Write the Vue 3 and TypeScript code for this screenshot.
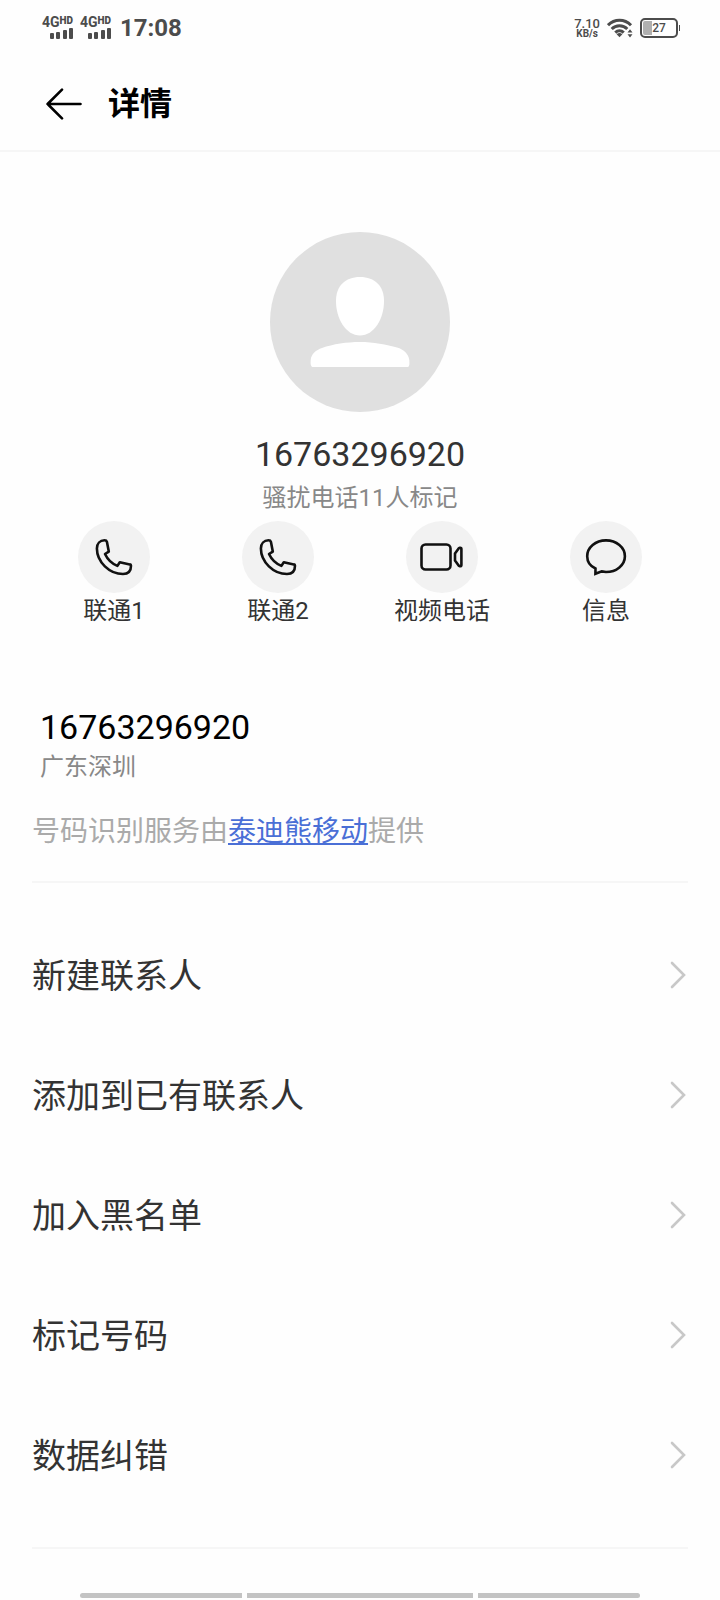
<script setup lang="ts">
interface Action {
  label: string
  icon: 'phone' | 'video' | 'message'
}

const phoneNumber = '16763296920'
const batteryLevel = 27
const signals = ['SIM 1', 'SIM 2']

const actions: Action[] = [
  { label: '联通1', icon: 'phone' },
  { label: '联通2', icon: 'phone' },
  { label: '视频电话', icon: 'video' },
  { label: '信息', icon: 'message' },
]

const options: string[] = ['新建联系人', '添加到已有联系人', '加入黑名单', '标记号码', '数据纠错']
</script>

<template>
  <div class="screen">
    <div class="status">
      <div v-for="sim in signals" :key="sim" class="signal">
        <div class="network">4G<span class="hd">HD</span></div>
        <svg class="bars" width="24" height="12" viewBox="0 0 24 12" aria-hidden="true">
          <rect x="0" y="6" width="4" height="6" rx="1" />
          <rect x="6" y="5" width="4" height="7" rx="1" />
          <rect x="13" y="3" width="4" height="9" rx="1" />
          <rect x="19" y="1" width="4" height="11" rx="1" />
        </svg>
      </div>
      <time class="clock">17:08</time>
      <div class="speed">
        <span class="rate">7.10</span>
        <span class="unit">KB/s</span>
      </div>
      <svg class="wifi" width="26" height="20" viewBox="0 0 26 20" aria-hidden="true">
        <g fill="none" stroke="#4c4c4c" stroke-width="3">
          <path d="M1 7.2C7.500 .6 17.500 .6 24 7.200" />
          <path d="M4.700 11C9 6.600 16 6.600 20.300 11" />
          <path d="M8.300 14.600C10.800 12 14.200 12 16.700 14.600" />
        </g>
        <path d="M9.600 16.200Q12.500 13.800 15.400 16.200L12.500 19.200Z" fill="#4c4c4c" />
        <path d="M20.500 14.500L23 11.200L25.500 14.500ZM20.500 16.200L23 19.500L25.500 16.200Z" fill="#4c4c4c" />
      </svg>
      <div class="battery">
        <div class="charge" :style="{ width: batteryLevel + '%' }"></div>
        <span class="level">{{ batteryLevel }}</span>
      </div>
      <div class="nub"></div>
    </div>

    <header class="header">
      <button class="back" type="button" aria-label="返回">
        <svg width="36" height="34" viewBox="0 0 36 34" fill="none" stroke="#000" stroke-width="2.600" stroke-linecap="round" stroke-linejoin="round">
          <path d="M34.500 17H1.600M16 2.600L1.600 17L16 31.400" />
        </svg>
      </button>
      <h1 class="title">详情</h1>
    </header>

    <main>
      <section class="profile">
        <svg class="avatar" width="180" height="180" viewBox="0 0 180 180" aria-hidden="true">
          <circle cx="90" cy="90" r="90" fill="#e0e0e0" />
          <path d="M90 45C105 45 114 54 114 69C114 87 104 103.500 90 103.500C76 103.500 66 87 66 69C66 54 75 45 90 45Z" fill="#fff" />
          <path d="M42.500 135C40.500 134.500 40.500 131 40.700 128C41.200 122 46 118 52 116C63 112 77 110 90 110C103 110 117 112.500 127 115.500C134 117.500 138.500 122 139.300 128C139.600 132 139.500 134.500 138 135Z" fill="#fff" />
        </svg>
        <h2 class="name">{{ phoneNumber }}</h2>
        <p class="marked">骚扰电话11人标记</p>
      </section>

      <nav class="actions">
        <button v-for="action in actions" :key="action.label" class="action" type="button">
          <span class="disc">
            <svg width="72" height="72" viewBox="0 0 72 72" fill="none" stroke="#111" stroke-width="2.600" stroke-linejoin="round" aria-hidden="true">
              <path v-if="action.icon === 'phone'" d="M26.500 19.300C22 19.300 18.900 22.500 18.900 27.500C18.900 41 31.500 53 45 53C50.500 53 53 49.500 53 44.800Q53 43.600 51.800 43.400L41.800 41.200L39.400 44.900Q31 41.500 27 33L30.800 30.600L28.900 20.800Q28.500 19.300 26.500 19.300Z" />
              <template v-else-if="action.icon === 'video'">
                <rect x="15.500" y="23.500" width="29" height="25" rx="4" />
                <path d="M55.400 28Q55.400 26.600 54 26.800L52.800 27.200L49 32.500V39.500L52.800 44.800L54 45.200Q55.400 45.400 55.400 44Z" />
              </template>
              <path v-else d="M25.500 47.500C20 45 17.200 40.500 17.200 35.200C17.200 26.500 25.500 19.400 36 19.400C46.500 19.400 54.900 26.500 54.900 35.200C54.900 44 46.500 51 36 51L31.800 50.400L25.400 52.800Z" stroke-linejoin="miter" />
            </svg>
          </span>
          <span class="caption">{{ action.label }}</span>
        </button>
      </nav>

      <section class="details">
        <div class="number">{{ phoneNumber }}</div>
        <div class="region">广东深圳</div>
      </section>

      <p class="provider">号码识别服务由<a href="#">泰迪熊移动</a>提供</p>

      <ul class="options">
        <li v-for="option in options" :key="option">
          <button class="option" type="button">
            <span>{{ option }}</span>
            <svg width="18" height="28" viewBox="0 0 18 28" fill="none" stroke="#c8c8c8" stroke-width="2.600" stroke-linecap="round" aria-hidden="true">
              <path d="M2 2L14 14L2 26" />
            </svg>
          </button>
        </li>
      </ul>
    </main>

    <div class="navbar" aria-hidden="true">
      <span></span>
      <span></span>
      <span></span>
    </div>
  </div>
</template>

<style>
body {
  margin: 0;
  background: #fefefe;
}
</style>

<style scoped>
.screen {
  display: flex;
  flex-direction: column;
  min-height: 100vh;
  box-sizing: border-box;
  background: #fefefe;
  color: #333;
  font-family: Roboto, "Noto Sans CJK SC", sans-serif;
}

button {
  border: 0;
  padding: 0;
  background: none;
  color: inherit;
  font: inherit;
  cursor: pointer;
}

h1,
h2,
p,
ul {
  margin: 0;
  padding: 0;
}

.status {
  display: flex;
  align-items: center;
  height: 56px;
  padding: 0 40px 0 42px;
  color: #4c4c4c;
}

.signal {
  display: flex;
  flex-direction: column;
  width: 32px;
  margin-right: 6px;
}

.network {
  display: flex;
  align-items: flex-start;
  height: 10px;
  font-size: 14px;
  font-weight: 700;
  line-height: 10px;
}

.hd {
  font-size: 10px;
  font-weight: 900;
  line-height: 8px;
}

.bars {
  align-self: flex-end;
  fill: #4c4c4c;
}

.clock {
  margin-left: 2px;
  font-size: 24px;
  font-weight: 700;
}

.speed {
  display: flex;
  flex-direction: column;
  align-items: center;
  margin-left: auto;
  font-weight: 500;
}

.rate {
  font-size: 13px;
  line-height: 11px;
}

.unit {
  font-size: 10px;
  font-weight: 700;
  line-height: 10px;
}

.wifi {
  margin: 0 7px;
}

.battery {
  position: relative;
  box-sizing: border-box;
  width: 38px;
  height: 20px;
  padding: 1px;
  border: 2px solid #4c4c4c;
  border-radius: 5px;
}

.charge {
  height: 100%;
  border-radius: 2px 0 0 2px;
  background: #b0b0b0;
}

.level {
  position: absolute;
  inset: 0;
  font-size: 12px;
  font-weight: 500;
  line-height: 16px;
  text-align: center;
}

.nub {
  width: 1px;
  height: 6px;
  margin-left: 1px;
  background: #4c4c4c;
}

.header {
  display: flex;
  align-items: center;
  height: 94px;
  border-bottom: 2px solid #f6f6f6;
}

.back {
  display: flex;
  margin: 2px 26px 0 46px;
}

.title {
  padding-top: 2px;
  color: #000;
  font-size: 32px;
  font-weight: 700;
  line-height: 48px;
}

.profile {
  display: flex;
  flex-direction: column;
  align-items: center;
  padding: 80px 0 1px;
}

.name {
  margin-top: 20px;
  font-size: 34px;
  font-weight: 400;
  line-height: 44px;
}

.marked {
  color: #888;
  font-size: 24px;
  line-height: 44px;
}

.actions {
  display: grid;
  grid-template-columns: repeat(4, 1fr);
  padding: 0 32px;
}

.action {
  display: flex;
  flex-direction: column;
  align-items: center;
}

.disc {
  display: flex;
  border-radius: 50%;
  background: #f2f2f2;
}

.caption {
  font-size: 24px;
  line-height: 36px;
}

.details {
  padding: 76px 40px 0;
}

.number {
  color: #000;
  font-size: 34px;
  line-height: 44px;
}

.region {
  color: #888;
  font-size: 24px;
  line-height: 36px;
}

.provider {
  margin: 0 32px;
  padding: 25px 0 27px;
  border-bottom: 2px solid #f6f6f6;
  color: #aaa;
  font-size: 28px;
  line-height: 44px;
}

.provider a {
  color: #4a6fd6;
  text-decoration: underline;
  text-decoration-thickness: 2px;
  text-underline-offset: 2px;
  text-decoration-skip-ink: none;
}

.options {
  margin: 0 32px;
  padding: 32px 0;
  border-bottom: 2px solid #f6f6f6;
  list-style: none;
}

.option {
  display: flex;
  align-items: center;
  justify-content: space-between;
  width: 100%;
  height: 120px;
  font-size: 34px;
  line-height: 48px;
  text-align: left;
}

.option span {
  padding-top: 2px;
}

.navbar {
  display: grid;
  grid-template-columns: 162fr 226fr 162fr;
  gap: 5px;
  margin-top: auto;
  padding: 0 80px 2px;
}

.navbar span {
  height: 5px;
  background: #c3c3c3;
}

.navbar span:first-child {
  border-radius: 3px 0 0 3px;
}

.navbar span:last-child {
  border-radius: 0 3px 3px 0;
}
</style>
